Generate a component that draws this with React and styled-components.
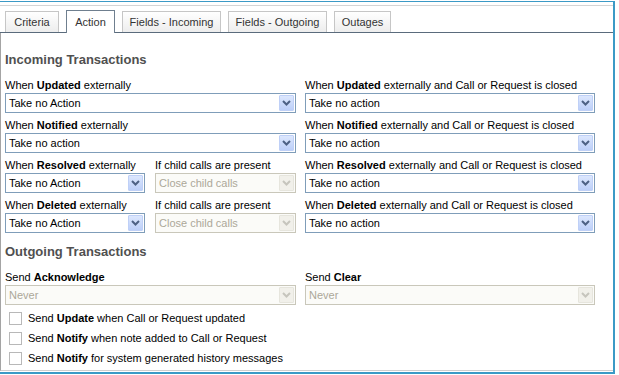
import React from 'react';
import styled, { createGlobalStyle, css } from 'styled-components';

const GlobalStyle = createGlobalStyle`
    body {
        margin: 0;
        padding-top: 1px;
        background: #fff;
        font-family: 'Liberation Sans', Arial, sans-serif;
        font-size: 11px;
        color: #000;
    }
`

const Frame = styled.div`
    width: 615px;
    height: 373px;
    box-sizing: border-box;
    border-top: 1px solid #3b9ac6;
    border-right: 2px solid #3b9ac6;
    border-bottom: 2px solid #3b9ac6;
    display: flex;
    flex-direction: column;
`

const TopRule = styled.div`
    margin-top: 3px;
    border-top: 1px solid #d4d4d4;
`

const TabStrip = styled.div`
    display: flex;
    align-items: flex-end;
    gap: 7px;
    padding: 4px 0 0 5px;
    border-bottom: 1px solid #5a6b7c;
    height: 22px;
`

const Tab = styled.div`
    width: ${p => p.w}px;
    height: 21px;
    box-sizing: border-box;
    display: flex;
    align-items: center;
    justify-content: center;
    color: #333;
    border: 1px solid #c6c6c6;
    border-bottom: none;
    background: linear-gradient(#ffffff, #ededed);
    cursor: pointer;

    ${p => p.active && css`
        height: 23px;
        margin-bottom: -1px;
        border-color: #6f7f8f;
        background: #fff;
    `}
`

const Panel = styled.div`
    flex: 1;
    border-left: 1px solid #a4a4a4;
    border-bottom: 1px solid #cfcfcf;
    margin-bottom: 1px;
    padding: 17px 0 0 4px;
`

const Heading = styled.div`
    font-size: 13px;
    font-weight: bold;
    color: #505050;
    line-height: 20px;
    margin-bottom: 8px;
    margin-top: ${p => p.top || 0}px;
`

const Grid = styled.div`
    display: grid;
    grid-template-columns: 291px 290px;
    column-gap: 9px;
    row-gap: 5px;
`

const Split = styled.div`
    display: grid;
    grid-template-columns: 140px 141px;
    column-gap: 10px;
`

const Label = styled.div`
    height: 15px;
    line-height: 14px;
    white-space: nowrap;

    b {
        font-weight: bold;
    }
`

const SelectBox = styled.div`
    height: 20px;
    box-sizing: border-box;
    border: 1px solid ${p => p.disabled ? '#c9c7ba' : '#7f9db9'};
    background: ${p => p.disabled ? '#fbfbf8' : '#fff'};
    color: ${p => p.disabled ? '#aca899' : '#000'};
    display: flex;
    align-items: center;
    padding-left: 3px;
`

const Value = styled.span`
    flex: 1;
    font-size: 11px;
`

const ArrowBtn = styled.span`
    width: 15px;
    height: 16px;
    margin-right: 1px;
    box-sizing: border-box;
    display: flex;
    align-items: center;
    justify-content: center;
    border: 1px solid ${p => p.disabled ? '#e6e5dd' : '#bfd0f7'};
    background: ${p => p.disabled
        ? '#f1f0ea'
        : 'linear-gradient(#dce7fd, #bccff9)'};
    border-radius: 1px;
`

const CheckRows = styled.div`
    margin-top: 3px;
    padding-left: 4px;
`

const CheckRow = styled.label`
    display: flex;
    align-items: center;
    height: 20px;
    gap: 6px;
    white-space: nowrap;
`

const Box = styled.span`
    width: 13px;
    height: 13px;
    box-sizing: border-box;
    border: 1px solid #b8b8b8;
    background: #fff;
`

const Select = ({ value, disabled }) => (
    <SelectBox disabled={disabled}>
        <Value>{value}</Value>
        <ArrowBtn disabled={disabled}>
            <svg width="9" height="6" viewBox="0 0 9 6">
                <polyline
                    points="1,1 4.5,4.5 8,1"
                    fill="none"
                    stroke={disabled ? '#c6c5bd' : '#4d6185'}
                    strokeWidth="2"
                />
            </svg>
        </ArrowBtn>
    </SelectBox>
)

const Field = ({ children, value, disabled }) => (
    <div>
        <Label>{children}</Label>
        <Select value={value} disabled={disabled} />
    </div>
)

const Check = ({ children }) => (
    <CheckRow>
        <Box />
        <span>{children}</span>
    </CheckRow>
)

const tabs = [
    { title: 'Criteria', w: 54 },
    { title: 'Action', w: 49, active: true },
    { title: 'Fields - Incoming', w: 99 },
    { title: 'Fields - Outgoing', w: 99 },
    { title: 'Outages', w: 57 },
]

const App = () => {
    return (
        <>
            <GlobalStyle />
            <Frame>
                <TopRule />
                <TabStrip>
                    {tabs.map((t, i) => (
                        <Tab key={i} w={t.w} active={t.active}>{t.title}</Tab>
                    ))}
                </TabStrip>
                <Panel>
                    <Heading>Incoming Transactions</Heading>
                    <Grid>
                        <Field value="Take no Action">When <b>Updated</b> externally</Field>
                        <Field value="Take no action">When <b>Updated</b> externally and Call or Request is closed</Field>
                        <Field value="Take no action">When <b>Notified</b> externally</Field>
                        <Field value="Take no action">When <b>Notified</b> externally and Call or Request is closed</Field>
                        <Split>
                            <Field value="Take no Action">When <b>Resolved</b> externally</Field>
                            <Field value="Close child calls" disabled>If child calls are present</Field>
                        </Split>
                        <Field value="Take no action">When <b>Resolved</b> externally and Call or Request is closed</Field>
                        <Split>
                            <Field value="Take no Action">When <b>Deleted</b> externally</Field>
                            <Field value="Close child calls" disabled>If child calls are present</Field>
                        </Split>
                        <Field value="Take no action">When <b>Deleted</b> externally and Call or Request is closed</Field>
                    </Grid>
                    <Heading top={9}>Outgoing Transactions</Heading>
                    <Grid>
                        <Field value="Never" disabled>Send <b>Acknowledge</b></Field>
                        <Field value="Never" disabled>Send <b>Clear</b></Field>
                    </Grid>
                    <CheckRows>
                        <Check>Send <b>Update</b> when Call or Request updated</Check>
                        <Check>Send <b>Notify</b> when note added to Call or Request</Check>
                        <Check>Send <b>Notify</b> for system generated history messages</Check>
                    </CheckRows>
                </Panel>
            </Frame>
        </>
    )
}

export default App;
